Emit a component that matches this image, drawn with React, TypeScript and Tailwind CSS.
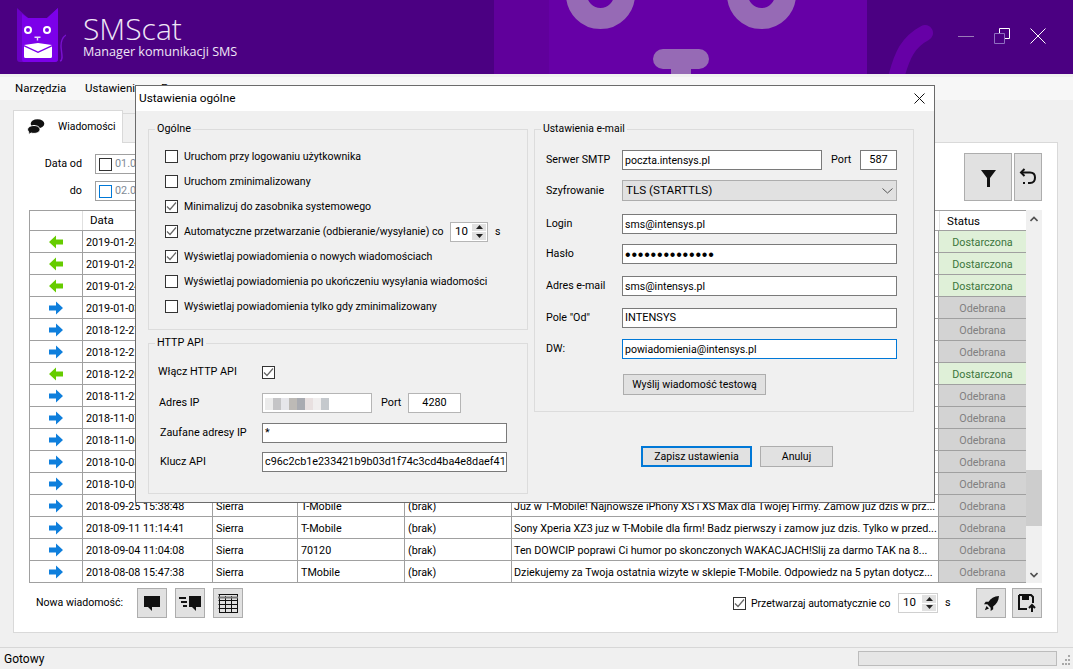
import React from "react";

const rows = [
  { dir: "in", date: "2019-01-24" },
  { dir: "in", date: "2019-01-24" },
  { dir: "in", date: "2019-01-24" },
  { dir: "out", date: "2019-01-03" },
  { dir: "out", date: "2018-12-27" },
  { dir: "out", date: "2018-12-21" },
  { dir: "in", date: "2018-12-20" },
  { dir: "out", date: "2018-11-22" },
  { dir: "out", date: "2018-11-07" },
  { dir: "out", date: "2018-11-06" },
  { dir: "out", date: "2018-10-03" },
  { dir: "out", date: "2018-10-02" },
  { dir: "out", date: "2018-09-25 15:38:48", name: "Sierra", from: "T-Mobile", subject: "(brak)", text: "Juz w T-Mobile! Najnowsze iPhony XS i XS Max dla Twojej Firmy. Zamow juz dzis w prz..." },
  { dir: "out", date: "2018-09-11 11:14:41", name: "Sierra", from: "T-Mobile", subject: "(brak)", text: "Sony Xperia XZ3 juz w T-Mobile dla firm! Badz pierwszy i zamow juz dzis. Tylko w przed..." },
  { dir: "out", date: "2018-09-04 11:04:08", name: "Sierra", from: "70120", subject: "(brak)", text: "Ten DOWCIP poprawi Ci humor po skonczonych WAKACJACH!Slij za darmo TAK na 8..." },
  { dir: "out", date: "2018-08-08 15:47:38", name: "Sierra", from: "TMobile", subject: "(brak)", text: "Dziekujemy za Twoja ostatnia wizyte w sklepie T-Mobile. Odpowiedz na 5 pytan dotycz..." },
];

const ipBlur = ["bg-[#ebebeb]", "bg-[#c4c4c6]", "bg-[#e6e6ea]", "bg-[#bdbab6]", "bg-[#a9abb1]", "bg-[#e8e0e0]", "bg-[#f0eeee]", "bg-[#c5c9cd]"];

function Arrow({ dir }: { dir: string }) {
  const color = dir === "in" ? "#66cc00" : "#0f7fdc";
  return (
    <svg width="14" height="14" viewBox="0 0 14 14" className={dir === "in" ? "-scale-x-100" : ""}>
      <path d="M0 4.5H7V0.5L14 7L7 13.5V9.5H0Z" fill={color} />
    </svg>
  );
}

function Check({ checked, className = "" }: { checked?: boolean; className?: string }) {
  return (
    <span className={`flex h-[13px] w-[13px] shrink-0 items-center justify-center border border-[#333] bg-white ${className}`}>
      {checked && (
        <svg width="11" height="11" viewBox="0 0 11 11">
          <path d="M1 5.5L4 8.5L10 1.5" fill="none" stroke="#666" strokeWidth="1.2" />
        </svg>
      )}
    </span>
  );
}

function CheckRow({ label, checked }: { label: string; checked?: boolean }) {
  return (
    <div className="flex h-[25px] items-center">
      <Check checked={checked} />
      <span className="ml-[6px] pt-[1px]">{label}</span>
    </div>
  );
}

function Spinner({ className = "" }: { className?: string }) {
  return (
    <div className={`flex h-[20px] items-center justify-between border border-[#b5b5b5] bg-white pl-[4px] text-[11.5px] ${className}`}>
      <span>10</span>
      <div className="flex h-[16px] w-[15px] flex-col gap-[1px] pr-[1px]">
        <div className="flex flex-1 items-center justify-center bg-[#e1e1e1]">
          <svg width="7" height="4" viewBox="0 0 7 4"><path d="M3.5 0L7 4H0Z" fill="#222" /></svg>
        </div>
        <div className="flex flex-1 items-center justify-center bg-[#e1e1e1]">
          <svg width="7" height="4" viewBox="0 0 7 4"><path d="M0 0H7L3.5 4Z" fill="#222" /></svg>
        </div>
      </div>
    </div>
  );
}

function Field({ children, className = "", focused }: { children?: React.ReactNode; className?: string; focused?: boolean }) {
  return (
    <div className={`flex h-[20px] items-center whitespace-nowrap border bg-white px-[2px] pt-[1px] ${focused ? "border-[#0078d7]" : "border-[#7a7a7a]"} ${className}`}>
      {children}
    </div>
  );
}

function ToolButton({ children, className = "" }: { children: React.ReactNode; className?: string }) {
  return (
    <div className={`flex items-center justify-center border border-[#adadad] bg-[#e1e1e1] ${className}`}>
      {children}
    </div>
  );
}

function EmailRow({ label, children, className = "" }: { label: string; children: React.ReactNode; className?: string }) {
  return (
    <div className={`flex items-center ${className}`}>
      <span className="w-[76px] shrink-0 pt-[1px] text-[10.7px]">{label}</span>
      {children}
    </div>
  );
}

function CatLogo() {
  return (
    <svg width="50" height="58" viewBox="16 6 50 58" className="mt-[6px] ml-[16px] shrink-0">
      <path d="M60 61C64 60 61 52 61 46C61 40 63 37 66 35" fill="none" stroke="#7a10d0" strokeWidth="1.4" />
      <path d="M17 8L28 18H47L58 8V59Q58 62 55 62H20Q17 62 17 59Z" fill="#6a00c4" />
      <path d="M22 14L28 18H47L58 8V59Q58 62 55 62H24Q22 62 22 59Z" fill="#7c00ea" />
      <circle cx="28" cy="30" r="3" fill="none" stroke="#fff" strokeWidth="2" />
      <circle cx="47" cy="30" r="3" fill="none" stroke="#fff" strokeWidth="2" />
      <path d="M34.5 36.5H40.5V38H38.2V40.5H36.8V38H34.5Z" fill="#e8d8f8" />
      <path d="M24 46.5L38 53L52 46.5V56.5Q52 58 50.5 58H25.5Q24 58 24 56.5Z" fill="#fff" />
      <path d="M24 45L38 43L52 45L38 51.5Z" fill="#fff" />
    </svg>
  );
}

function HeaderArt() {
  return (
    <svg width="1073" height="74" viewBox="0 0 1073 74" className="absolute top-0 left-0">
      <rect x="494" y="0" width="373" height="74" fill="#60009b" />
      <rect x="549" y="0" width="318" height="74" fill="#6600a6" />
      <circle cx="600.5" cy="-5.5" r="24" fill="none" stroke="#966ab5" strokeWidth="21" />
      <circle cx="761.5" cy="-5.5" r="24" fill="none" stroke="#966ab5" strokeWidth="21" />
      <rect x="653" y="49" width="56" height="20" rx="10" fill="#966ab5" />
      <rect x="671" y="68" width="20" height="6" fill="#966ab5" />
      <path d="M925 33C908 42 902 55 896 78" fill="none" stroke="#6600a6" strokeWidth="16" strokeLinecap="round" />
    </svg>
  );
}

function WindowButtons() {
  return (
    <div className="absolute top-[28px] right-[27px] flex items-center gap-[20px]">
      <svg width="16" height="16" viewBox="0 0 16 16"><path d="M0 8.5H16" stroke="#9a7ab8" strokeWidth="1" /></svg>
      <svg width="16" height="16" viewBox="0 0 16 16" fill="none">
        <path d="M0.5 5.5H10.5V15.5H0.5Z" stroke="#8f6fc0" />
        <path d="M5.5 5V0.5H15.5V10.5H11" stroke="#fff" />
      </svg>
      <svg width="16" height="16" viewBox="0 0 16 16"><path d="M0.5 0.5L15.5 15.5M15.5 0.5L0.5 15.5" stroke="#fff" strokeWidth="1" /></svg>
    </div>
  );
}

function DialogBody() {
  return (
    <div className="flex gap-[6px] pl-[12px] pt-[11px] text-[10.55px]">
      <div className="flex w-[380px] flex-col gap-[6px]">
        <fieldset className="h-[208px] border border-[#dcdcdc] px-[16px]">
          <legend className="-ml-[10px] px-[2px] text-[10.8px] leading-[14px]">Ogólne</legend>
          <div className="pt-[8px]">
            <CheckRow label="Uruchom przy logowaniu użytkownika" />
            <CheckRow label="Uruchom zminimalizowany" />
            <CheckRow label="Minimalizuj do zasobnika systemowego" checked />
            <div className="flex h-[25px] items-center">
              <Check checked />
              <span className="ml-[6px] w-[266px] whitespace-nowrap pt-[1px]">Automatyczne przetwarzanie (odbieranie/wysyłanie) co</span>
              <Spinner className="w-[38px]" />
              <span className="ml-[7px]">s</span>
            </div>
            <CheckRow label="Wyświetlaj powiadomienia o nowych wiadomościach" checked />
            <CheckRow label="Wyświetlaj powiadomienia po ukończeniu wysyłania wiadomości" />
            <CheckRow label="Wyświetlaj powiadomienia tylko gdy zminimalizowany" />
          </div>
        </fieldset>
        <fieldset className="h-[158px] border border-[#dcdcdc] pl-[9px] text-[10.8px]">
          <legend className="-ml-[3px] px-[2px] leading-[14px]">HTTP API</legend>
          <div className="mt-[12px] flex h-[20px] items-center">
            <span className="w-[104px] pt-[1px]">Włącz HTTP API</span>
            <Check checked />
          </div>
          <div className="mt-[11px] flex items-center">
            <span className="w-[104px] pl-[1px] pt-[1px]">Adres IP</span>
            <Field className="w-[110px] border-[#b5b5b5] pt-0">
              {ipBlur.map((c) => (
                <span key={c} className={`h-[12px] w-[8px] ${c}`} />
              ))}
            </Field>
            <span className="ml-[9px] w-[27px] pt-[1px]">Port</span>
            <Field className="w-[53px] justify-center border-[#b5b5b5]">4280</Field>
          </div>
          <div className="mt-[10px] flex items-center">
            <span className="w-[104px] pl-[2px] pt-[1px]">Zaufane adresy IP</span>
            <Field className="w-[245px]">*</Field>
          </div>
          <div className="mt-[9px] flex items-center">
            <span className="w-[104px] pl-[2px] pt-[1px]">Klucz API</span>
            <Field className="w-[245px] overflow-hidden">c96c2cb1e233421b9b03d1f74c3cd4ba4e8daef41</Field>
          </div>
        </fieldset>
      </div>
      <div className="w-[380px]">
        <fieldset className="h-[290px] border border-[#dcdcdc] pl-[11px]">
          <legend className="-ml-[5px] px-[2px] text-[10.4px] leading-[14px]">Ustawienia e-mail</legend>
          <EmailRow label="Serwer SMTP" className="mt-[14px]">
            <Field className="w-[200px]">poczta.intensys.pl</Field>
            <span className="ml-[9px] w-[29px] pt-[1px] text-[10.8px]">Port</span>
            <Field className="w-[37px] justify-center text-[11px]">587</Field>
          </EmailRow>
          <EmailRow label="Szyfrowanie" className="mt-[10px]">
            <div className="flex h-[21px] w-[275px] items-center justify-between border border-[#adadad] bg-[#e1e1e1] px-[3px] pt-[1px]">
              <span className="text-[11.7px]">TLS (STARTTLS)</span>
              <svg width="11" height="6" viewBox="0 0 11 6"><path d="M0.5 0.5L5.5 5L10.5 0.5" fill="none" stroke="#555" /></svg>
            </div>
          </EmailRow>
          <EmailRow label="Login" className="mt-[13px]">
            <Field className="w-[275px]">sms@intensys.pl</Field>
          </EmailRow>
          <EmailRow label="Hasło" className="mt-[10px]">
            <Field className="w-[275px] overflow-hidden pt-0">
              <span className="font-[Liberation_Sans,sans-serif] text-[16px] leading-none tracking-[0.8px]">••••••••••••••</span>
            </Field>
          </EmailRow>
          <EmailRow label="Adres e-mail" className="mt-[12px]">
            <Field className="w-[275px]">sms@intensys.pl</Field>
          </EmailRow>
          <EmailRow label={'Pole "Od"'} className="mt-[12px]">
            <Field className="w-[275px] text-[11px]">INTENSYS</Field>
          </EmailRow>
          <EmailRow label="DW:" className="mt-[11px]">
            <Field focused className="w-[275px]">powiadomienia@intensys.pl</Field>
          </EmailRow>
          <div className="mt-[15px] ml-[77px] flex h-[21px] w-[143px] items-center justify-center border border-[#adadad] bg-[#e1e1e1] pt-[1px]">
            Wyślij wiadomość testową
          </div>
        </fieldset>
        <div className="mt-[34px] ml-[107px] flex gap-[8px]">
          <div className="flex h-[21px] w-[111px] items-center justify-center border-2 border-[#0078d7] bg-[#e1e1e1] pt-[1px]">Zapisz ustawienia</div>
          <div className="flex h-[21px] w-[73px] items-center justify-center border border-[#adadad] bg-[#e1e1e1] pt-[1px]">Anuluj</div>
        </div>
      </div>
    </div>
  );
}

export default function App() {
  return (
    <div className="relative flex h-[669px] w-[1073px] flex-col overflow-hidden bg-[#f0f0f0] font-[Roboto,sans-serif] text-[10.8px] text-black">
      <div className="relative flex h-[74px] shrink-0 overflow-hidden bg-[#4b0082]">
        <HeaderArt />
        <CatLogo />
        <div className="relative ml-[17px] text-[#efe6f6]">
          <div className="mt-[12px] font-[Open_Sans,sans-serif] text-[30px] font-light leading-[33px]">SMScat</div>
          <div className="font-[Open_Sans,sans-serif] text-[12.6px] leading-[14px]">Manager komunikacji SMS</div>
        </div>
        <WindowButtons />
      </div>

      <div className="mt-[3px] flex h-[23px] shrink-0 items-center bg-[#f7f7f7] pl-[15px] text-[11.5px]">
        <span className="w-[70px]">Narzędzia</span>
        <span className="w-[76px]">Ustawienia</span>
        <span>Pomoc</span>
      </div>

      <div className="flex flex-1 flex-col pl-[13px] pt-[10px]">
        <div className="relative -mb-[1px] flex h-[33px] items-end">
          <div className="flex h-[33px] w-[110px] items-center border border-b-0 border-[#d9d9d9] bg-white pl-[13px]">
            <svg width="18" height="16" viewBox="0 0 18 16">
              <ellipse cx="10.5" cy="4.8" rx="6.8" ry="4.6" fill="#111" />
              <path d="M7 6.5C10.5 6.5 13 8.3 13 10.5C13 12.7 10.5 14.4 7 14.4C6 14.4 5 14.3 4.2 14L1 15.8L1.8 13.2C1 12.5 0.6 11.5 0.6 10.5C0.6 8.3 3.5 6.5 7 6.5Z" fill="#111" stroke="#fff" strokeWidth="1" />
            </svg>
            <span className="ml-[13px] text-[10.4px]">Wiadomości</span>
          </div>
          <div className="h-[30px] w-[110px] border border-l-0 border-[#d9d9d9] bg-[#f0f0f0]" />
        </div>
        <div className="h-[491px] w-[1045px] border border-[#d9d9d9] bg-white px-[15px]">
          <div className="flex h-[67px] justify-between">
            <div className="flex flex-col gap-[7px] pt-[11px]">
              {[
                { label: "Data od", value: "01.0", active: false },
                { label: "do", value: "02.0", active: true },
              ].map((d) => (
                <div key={d.label} className="flex items-center">
                  <span className="w-[53px] pt-[1px] text-right text-[10.8px]">{d.label}</span>
                  <div className="ml-[13px] flex h-[20px] w-[100px] items-center border border-[#a0a0a0] pl-[3px] text-[#7f8a96]">
                    <span className={`h-[13px] w-[13px] border ${d.active ? "border-[#0078d7]" : "border-[#333]"}`} />
                    <span className="ml-[3px]">{d.value}</span>
                  </div>
                </div>
              ))}
            </div>
            <div className="flex gap-[2px] pt-[10px]">
              <ToolButton className="h-[48px] w-[48px]">
                <svg width="15" height="17" viewBox="0 0 15 17" className="mt-[2px]"><path d="M0 0H15L9 8V17H6V8Z" fill="#111" /></svg>
              </ToolButton>
              <ToolButton className="h-[48px] w-[28px]">
                <svg width="18" height="18" viewBox="0 0 18 18" fill="none" stroke="#111" strokeWidth="2">
                  <path d="M5.5 1L2 4.5L5.5 8" />
                  <path d="M2.5 4.5H11Q16 4.5 16 9.5Q16 15 11 15H9" />
                  <path d="M4 15H6" />
                </svg>
              </ToolButton>
            </div>
          </div>

          <div className="flex h-[373px]">
            <div className="w-[997px] overflow-hidden border-t border-l border-[#a0a0a0]">
              <div className="flex h-[20px] items-center border-b border-[#a0a0a0] bg-white">
                <div className="h-full w-[53px] border-r border-[#e0e0e0]" />
                <div className="w-[857px] pl-[7px] text-[11.5px]">Data</div>
                <div className="h-full w-[87px] border-l border-[#e0e0e0] pl-[7px] text-[11.5px] leading-[20px]">Status</div>
              </div>
              {rows.map((r, i) => (
                <div key={i} className="flex h-[22px] items-center border-b border-[#a0a0a0] text-[10.75px]">
                  <div className="flex h-full w-[53px] items-center justify-center border-r border-[#a0a0a0]">
                    <Arrow dir={r.dir} />
                  </div>
                  <div className="flex h-full w-[130px] items-center border-r border-[#a0a0a0] pl-[3px] pt-[3px]">{r.date}</div>
                  <div className="flex h-full w-[85px] items-center border-r border-[#a0a0a0] pl-[3px] pt-[3px]">{r.name}</div>
                  <div className="flex h-full w-[107px] items-center border-r border-[#a0a0a0] pl-[3px] pt-[3px]">{r.from}</div>
                  <div className="flex h-full w-[107px] items-center border-r border-[#a0a0a0] pl-[3px] pt-[3px]">{r.subject}</div>
                  <div className="flex h-full w-[427px] items-center overflow-hidden whitespace-nowrap border-r border-[#a0a0a0] pl-[2px] pt-[3px]">{r.text}</div>
                  {r.dir === "in" ? (
                    <div className="flex h-full w-[87px] items-center justify-center bg-[#dff0d8] pt-[3px] text-[#3c763d]">Dostarczona</div>
                  ) : (
                    <div className="flex h-full w-[87px] items-center justify-center bg-[#d3d3d3] pt-[3px] text-[#808080]">Odebrana</div>
                  )}
                </div>
              ))}
            </div>
            <div className="flex w-[16px] flex-col bg-[#f0f0f0]">
              <div className="flex h-[17px] items-center justify-center">
                <svg width="8" height="6" viewBox="0 0 8 6"><path d="M0.5 5L4 1.5L7.5 5" fill="none" stroke="#505050" strokeWidth="1.6" /></svg>
              </div>
              <div className="mt-[243px] h-[56px] bg-[#cdcdcd]" />
              <div className="mt-auto flex h-[17px] items-center justify-center">
                <svg width="8" height="6" viewBox="0 0 8 6"><path d="M0.5 1L4 4.5L7.5 1" fill="none" stroke="#505050" strokeWidth="1.6" /></svg>
              </div>
            </div>
          </div>

          <div className="flex items-start justify-between pt-[5px]">
            <div className="flex h-[30px] items-center pl-[7px]">
              <span className="w-[101px] whitespace-nowrap text-[10.6px]">Nowa wiadomość:</span>
              <div className="flex gap-[8px]">
                <ToolButton className="h-[30px] w-[30px]">
                  <svg width="16" height="16" viewBox="0 0 16 16"><path d="M0 1H16V12H8V16L4 12H0Z" fill="#111" /></svg>
                </ToolButton>
                <ToolButton className="h-[30px] w-[30px]">
                  <svg width="22" height="16" viewBox="0 0 22 16" fill="#111">
                    <path d="M10 1H22V12H17V16L13 12H10Z" />
                    <path d="M0 2H7V4H0ZM2 6H8V8H2ZM4 10H8V12H4Z" />
                  </svg>
                </ToolButton>
                <ToolButton className="h-[30px] w-[30px]">
                  <svg width="20" height="20" viewBox="0 0 20 20" fill="none" stroke="#111" strokeWidth="1">
                    <path d="M0.5 1.5H19.5M0.5 7.5H19.5M0.5 11.5H19.5M0.5 15.5H19.5M1 19.5H19.5M1.5 1V19.5M7.5 3V19.5M13.5 3V19.5M19.5 1V20" />
                    <path d="M0 4.5H20" stroke="#777" strokeWidth="2" />
                  </svg>
                </ToolButton>
              </div>
            </div>
            <div className="flex h-[30px] items-center">
              <Check checked />
              <span className="ml-[5px] w-[147px] whitespace-nowrap pt-[1px] text-[10.45px]">Przetwarzaj automatycznie co</span>
              <Spinner className="w-[40px] border-[#d0d0d0]" />
              <span className="ml-[7px] w-[31px]">s</span>
              <ToolButton className="h-[30px] w-[30px]">
                <svg width="15" height="15" viewBox="0 0 18 18" fill="#111">
                  <path d="M18 0C12 0.5 8 3 5.5 7H2L0 10H4L8 14V18L11 16V12.5C15 10 17.5 6 18 0Z" />
                  <path d="M3 12L1 17L6 15Z" />
                </svg>
              </ToolButton>
              <ToolButton className="ml-[6px] h-[30px] w-[30px]">
                <svg width="18" height="18" viewBox="0 0 18 18" fill="none">
                  <path d="M1 1H13L15 3V9M9 15H1V1" stroke="#111" strokeWidth="2" />
                  <path d="M4 1H11V6H4Z" fill="#111" />
                  <path d="M14 18V12M11 14L14 11L17 14" stroke="#111" strokeWidth="2" />
                </svg>
              </ToolButton>
            </div>
          </div>
        </div>
      </div>

      <div className="mt-[14px] flex h-[22px] shrink-0 items-center justify-between border-t border-[#d7d7d7] pl-[4px] text-[12px]">
        <span>Gotowy</span>
        <div className="flex items-center">
          <div className="h-[15px] w-[199px] border border-[#bcbcbc] bg-[#e6e6e6]" />
          <svg width="16" height="18" viewBox="0 0 16 18" fill="#a8a8a8">
            <path d="M11 5h2v2h-2zM8 9h2v2H8zM11 9h2v2h-2zM5 13h2v2H5zM8 13h2v2H8zM11 13h2v2h-2z" />
          </svg>
        </div>
      </div>

      <div className="absolute top-[85px] left-[135px] h-[418px] w-[800px] border border-[#6b6b6b] bg-[#f0f0f0]">
        <div className="flex h-[25px] items-center justify-between bg-white pl-[3px] pr-[9px] text-[11.8px]">
          <span>Ustawienia ogólne</span>
          <svg width="11" height="11" viewBox="0 0 11 11"><path d="M0.5 0.5L10.5 10.5M10.5 0.5L0.5 10.5" stroke="#111" /></svg>
        </div>
        <DialogBody />
      </div>
    </div>
  );
}
